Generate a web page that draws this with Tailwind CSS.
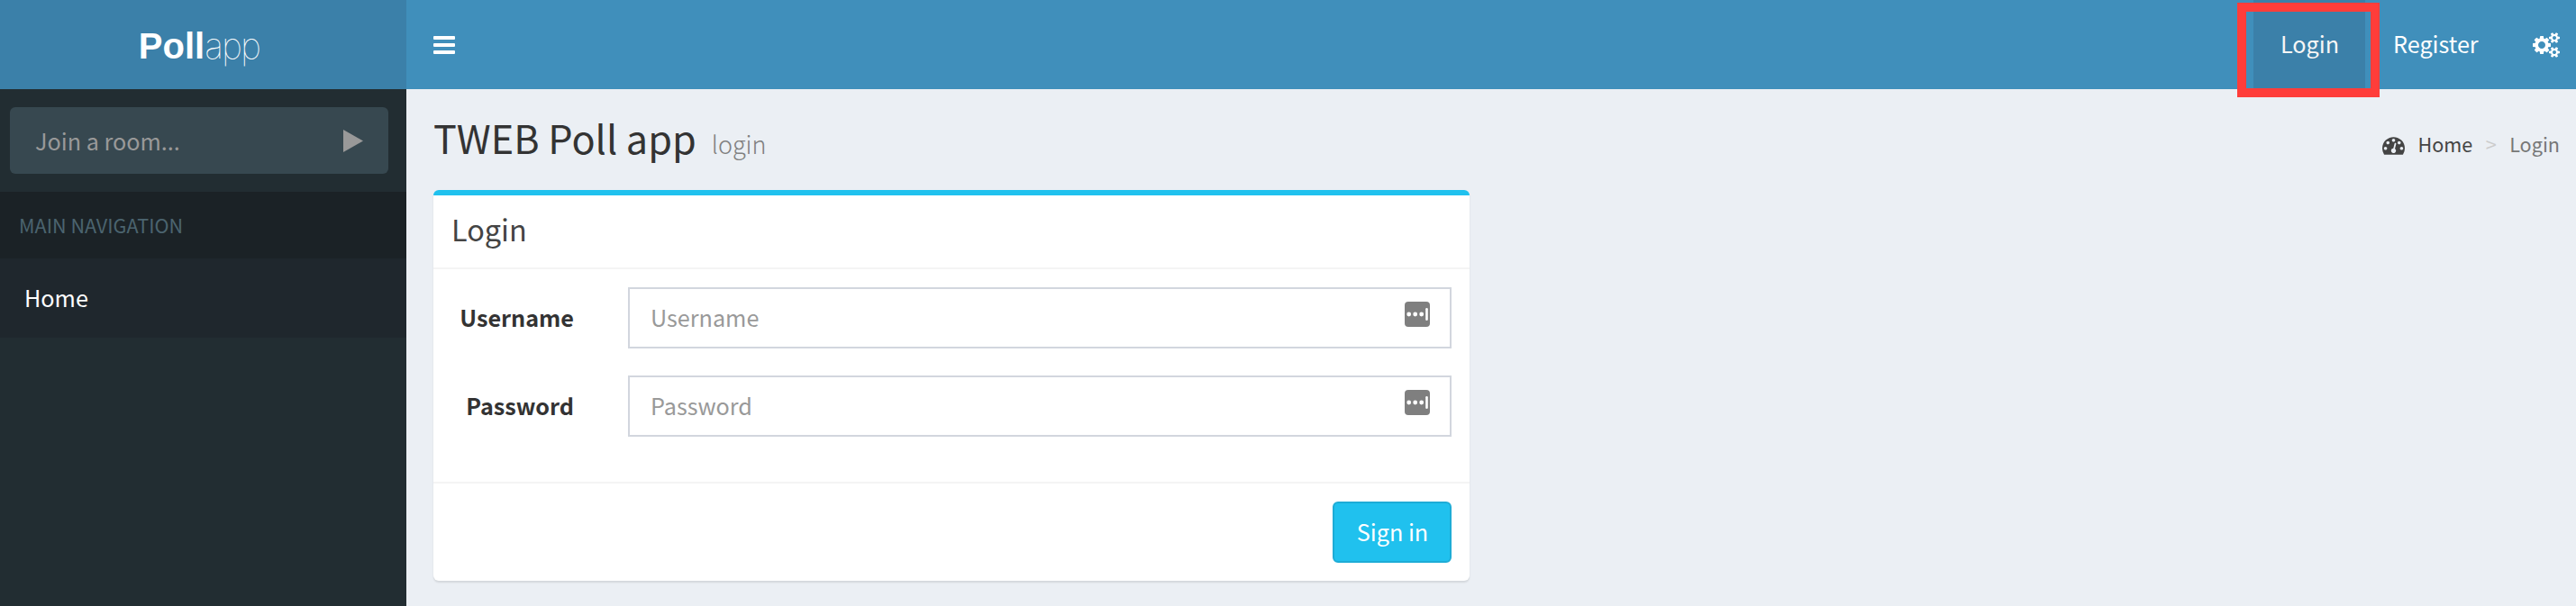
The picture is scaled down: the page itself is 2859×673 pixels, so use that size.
<!DOCTYPE html>
<html lang="en">
<head>
<meta charset="utf-8">
<title>TWEB Poll app</title>
<script src="https://cdn.jsdelivr.net/npm/@tailwindcss/browser@4"></script>
</head>
<body class="h-[673px] overflow-hidden bg-[#ebeff4] font-['Noto_Sans_CJK_SC','Noto_Sans',sans-serif] text-[25.2px] leading-[40px] text-[#333]">
<div class="flex h-full flex-col">
  <header class="flex h-[99px] shrink-0 bg-[#408fbb] text-white">
    <a class="flex w-[451px] items-center justify-center bg-[#3b80a9] pr-[9px] pt-[3px] font-['Liberation_Sans',sans-serif] text-[40px]"><b>Poll</b><span class="font-['Inter',sans-serif] text-[39.5px] font-thin tracking-[-1.9px]">app</span></a>
    <nav class="flex flex-1 items-center justify-between pl-[30px] pr-[18px]">
      <button class="flex w-6 flex-col gap-1" aria-label="Toggle navigation">
        <span class="h-1 w-full rounded-[1px] bg-white"></span>
        <span class="h-1 w-full rounded-[1px] bg-white"></span>
        <span class="h-1 w-full rounded-[1px] bg-white"></span>
      </button>
      <div class="flex h-full items-center">
        <a class="relative flex h-full w-[124px] items-center justify-center bg-[#3b80a9] pb-[3px] pl-px text-[#f6f6f6]">Login
          <span class="absolute -left-[18px] top-[3px] h-[105px] w-[158px] border-[10px] border-[#ff3d3a]"></span>
        </a>
        <a class="flex h-full w-[156px] items-center pb-[3px] pl-[31px]">Register</a>
        <svg class="ml-[30px] h-[28px] w-[30px]" viewBox="0 0 1920 1792" fill="currentColor"><path d="M896 896q0-106-75-181t-181-75-181 75-75 181 75 181 181 75 181-75 75-181zm768 512q0-52-38-90t-90-38-90 38-38 90q0 53 37.5 90.5t90.5 37.5 90.5-37.5 37.5-90.5zm0-1024q0-52-38-90t-90-38-90 38-38 90q0 53 37.5 90.5t90.5 37.5 90.5-37.5 37.5-90.5zm-384 421v185q0 10-7 19.5t-16 10.5l-155 24q-11 35-32 76 34 48 90 115 7 11 7 20 0 12-7 19-23 30-82.5 89.5t-78.5 59.5q-11 0-21-7l-115-90q-37 19-77 31-11 108-23 155-7 24-30 24h-186q-11 0-20-7.5t-10-17.5l-23-153q-34-10-75-31l-118 89q-7 7-20 7-11 0-21-8-144-133-144-160 0-9 7-19 10-14 41-53t47-61q-23-44-35-82l-152-24q-10-1-17-9.5t-7-19.5v-185q0-10 7-19.5t16-10.5l155-24q11-35 32-76-34-48-90-115-7-11-7-20 0-12 7-20 22-30 82-89t79-59q11 0 21 7l115 90q34-18 77-32 11-108 23-154 7-24 30-24h186q11 0 20 7.5t10 17.5l23 153q34 10 75 31l118-89q8-7 20-7 11 0 21 8 144 133 144 160 0 8-7 19-12 16-42 54t-45 60q23 48 34 82l152 23q10 2 17 10.5t7 19.5zm640 533v140q0 16-149 31-12 27-30 52 51 113 51 138 0 4-4 7-122 71-124 71-8 0-46-47t-52-68q-20 2-30 2t-30-2q-14 21-52 68t-46 47q-2 0-124-71-4-3-4-7 0-25 51-138-18-25-30-52-149-15-149-31v-140q0-16 149-31 13-29 30-52-51-113-51-138 0-4 4-7 4-2 35-20t59-34 30-16q8 0 46 46.5t52 67.5q20-2 30-2t30 2q51-71 92-112l6-2q4 0 124 70 4 3 4 7 0 25-51 138 17 23 30 52 149 15 149 31zm0-1024v140q0 16-149 31-12 27-30 52 51 113 51 138 0 4-4 7-122 71-124 71-8 0-46-47t-52-68q-20 2-30 2t-30-2q-14 21-52 68t-46 47q-2 0-124-71-4-3-4-7 0-25 51-138-18-25-30-52-149-15-149-31v-140q0-16 149-31 13-29 30-52-51-113-51-138 0-4 4-7 4-2 35-20t59-34 30-16q8 0 46 46.5t52 67.5q20-2 30-2t30 2q51-71 92-112l6-2q4 0 124 70 4 3 4 7 0 25-51 138 17 23 30 52 149 15 149 31z"/></svg>
      </div>
    </nav>
  </header>

  <div class="flex min-h-0 flex-1">
    <aside class="w-[451px] shrink-0 bg-[#222d32] pt-5">
      <div class="ml-[11px] flex h-[74px] w-[420px] items-center justify-between rounded-[6px] bg-[#374850] pl-[28px] pr-[28px] text-[#999]">
        <span>Join a room...</span>
        <svg class="h-[25px] w-[22px]" viewBox="0 0 22 24" preserveAspectRatio="none" fill="currentColor"><path d="M0 0 22 12 0 24z"/></svg>
      </div>
      <div class="mt-5 flex h-[74px] items-center bg-[#1b2226] pb-[1px] pl-[21px] text-[21.6px] text-[#4b646f]">MAIN NAVIGATION</div>
      <a class="flex h-[88px] items-center bg-[#1f272d] pb-[2px] pl-[27px] text-white">Home</a>
    </aside>

    <main class="flex-1 pl-[30px] pr-[18px]">
      <div class="flex h-[112px] items-start justify-between">
        <h1 class="flex items-baseline pt-[33px] text-[43.2px] leading-[40px]">TWEB Poll app<small class="ml-[17px] text-[27px] font-light text-[#808080]">login</small></h1>
        <div class="flex items-center pt-[41px] text-[21.6px] text-[#444]">
          <svg class="mr-[14px] mt-[3px] h-[20px] w-[25px]" viewBox="0 256 1792 1408" fill="currentColor"><path d="M384 1152q0-53-37.5-90.5t-90.5-37.5-90.5 37.5-37.5 90.5 37.5 90.5 90.5 37.5 90.5-37.5 37.5-90.5zm192-448q0-53-37.5-90.5t-90.5-37.5-90.5 37.5-37.5 90.5 37.5 90.5 90.5 37.5 90.5-37.5 37.5-90.5zm428 481l101-382q6-26-7.5-48.5t-38.5-29.5-48 6.5-30 39.5l-101 382q-60 5-107 43.5t-63 98.5q-20 77 20 146t117 89 146-20 89-117q16-60-6-117t-72-91zm660-33q0-53-37.5-90.5t-90.5-37.5-90.5 37.5-37.5 90.5 37.5 90.5 90.5 37.5 90.5-37.5 37.5-90.5zm-640-640q0-53-37.5-90.5t-90.5-37.5-90.5 37.5-37.5 90.5 37.5 90.5 90.5 37.5 90.5-37.5 37.5-90.5zm448 192q0-53-37.5-90.5t-90.5-37.5-90.5 37.5-37.5 90.5 37.5 90.5 90.5 37.5 90.5-37.5 37.5-90.5zm320 448q0 261-141 483-19 29-54 29h-1402q-35 0-54-29-141-221-141-483 0-182 71-348t191-286 286-191 348-71 348 71 286 191 191 286 71 348z"/></svg>
          <span>Home</span><span class="mx-[14.5px] text-[#ccc]">&gt;</span><span class="text-[#777]">Login</span>
        </div>
      </div>

      <section class="h-[434px] w-[1150px] rounded-[6px] border-t-[6px] border-[#20c1ee] bg-white shadow-[0_2px_2px_rgba(0,0,0,0.1)]">
        <h3 class="flex h-[82px] items-center border-b-2 border-[#f4f4f4] pb-[7px] pl-5 text-[32.4px] text-[#444]">Login</h3>
        <form class="flex h-[236px] flex-col gap-[30px] px-5 pt-5">
          <div class="flex h-[68px]">
            <label class="flex w-[136px] items-center justify-end pb-[2px] font-bold">Username</label>
            <div class="ml-[60px] flex flex-1 items-center justify-between border-2 border-[#d2d6de] pb-[2px] pl-[23px] pr-[22px] text-[#999]"><span>Username</span>
              <svg class="mb-[6px] size-7" viewBox="0 0 28 28"><rect width="28" height="28" rx="4" fill="#7f7f7f"/><g fill="#fff"><circle cx="4.7" cy="14" r="2.4"/><circle cx="11.7" cy="14" r="2.4"/><circle cx="18.7" cy="14" r="2.4"/><rect x="23.2" y="7" width="2.6" height="14" rx="1.3"/></g></svg>
            </div>
          </div>
          <div class="flex h-[68px]">
            <label class="flex w-[136px] items-center justify-end pb-[2px] font-bold">Password</label>
            <div class="ml-[60px] flex flex-1 items-center justify-between border-2 border-[#d2d6de] pb-[2px] pl-[23px] pr-[22px] text-[#999]"><span>Password</span>
              <svg class="mb-[6px] size-7" viewBox="0 0 28 28"><rect width="28" height="28" rx="4" fill="#7f7f7f"/><g fill="#fff"><circle cx="4.7" cy="14" r="2.4"/><circle cx="11.7" cy="14" r="2.4"/><circle cx="18.7" cy="14" r="2.4"/><rect x="23.2" y="7" width="2.6" height="14" rx="1.3"/></g></svg>
            </div>
          </div>
        </form>
        <div class="flex justify-end border-t-2 border-[#f4f4f4] px-5 pt-5">
          <button class="flex h-[68px] w-[132px] items-center justify-center rounded-[6px] border-2 border-[#1eacd6] bg-[#20c1ee] pb-[2px] pl-px text-white">Sign in</button>
        </div>
      </section>
    </main>
  </div>
</div>
</body>
</html>
